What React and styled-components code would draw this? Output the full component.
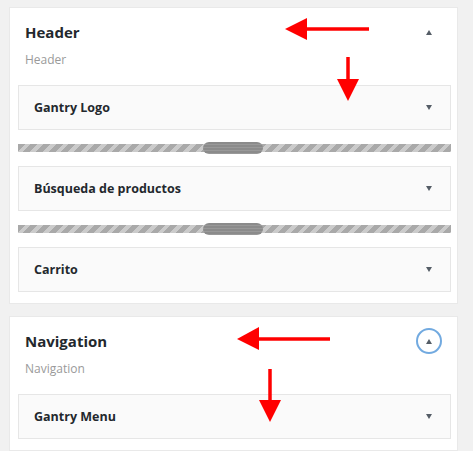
import React from "react";
import styled, { createGlobalStyle } from "styled-components";

const GlobalStyle = createGlobalStyle`
  body {
    margin: 0;
    background: #f1f1f1;
    font-family: "Open Sans", "Noto Sans", sans-serif;
  }
`;

const sections = [
  {
    title: "Header",
    subtitle: "Header",
    focused: false,
    widgets: ["Gantry Logo", "Búsqueda de productos", "Carrito"],
  },
  {
    title: "Navigation",
    subtitle: "Navigation",
    focused: true,
    widgets: ["Gantry Menu"],
  },
];

function Section({ title, subtitle, focused, widgets }) {
  return (
    <Panel>
      <TitleRow>
        <Title>{title}</Title>
        <Toggle $focused={focused}>
          <Caret $up />
        </Toggle>
      </TitleRow>
      <Subtitle>{subtitle}</Subtitle>
      <WidgetList>
        {widgets.map((w, i) => (
          <React.Fragment key={w}>
            {i > 0 && (
              <Separator>
                <Stripe />
                <Handle />
              </Separator>
            )}
            <Widget>
              <WidgetName>{w}</WidgetName>
              <Caret />
            </Widget>
          </React.Fragment>
        ))}
      </WidgetList>
    </Panel>
  );
}

function Arrows() {
  return (
    <Overlay width="473" height="451" viewBox="0 0 473 451">
      <g fill="#ff0000" stroke="#ff0000">
        <line x1="369" y1="29" x2="304" y2="29" strokeWidth="3.5" />
        <polygon points="285,29 307,18 307,40" stroke="none" />
        <line x1="348" y1="57" x2="348" y2="82" strokeWidth="3.5" />
        <polygon points="348,101 337,79 359,79" stroke="none" />
        <line x1="330" y1="339" x2="256" y2="339" strokeWidth="3.5" />
        <polygon points="237,339 259,327 259,350" stroke="none" />
        <line x1="270" y1="369" x2="270" y2="402" strokeWidth="3.5" />
        <polygon points="270,422 259,400 281,400" stroke="none" />
      </g>
    </Overlay>
  );
}

export default function App() {
  return (
    <>
      <GlobalStyle />
      <Page>
        {sections.map((s) => (
          <Section key={s.title} {...s} />
        ))}
        <Arrows />
      </Page>
    </>
  );
}

const Page = styled.div`
  position: relative;
  width: 473px;
  height: 451px;
  box-sizing: border-box;
  padding: 7px 15px 0 9px;
  display: flex;
  flex-direction: column;
  gap: 12px;
  overflow: hidden;
`;

const Panel = styled.section`
  background: #fff;
  border: 1px solid #e9e9e9;
  padding: 13px 6px 11px 8px;
`;

const TitleRow = styled.div`
  display: flex;
  align-items: center;
  justify-content: space-between;
  padding: 0 9px 0 7px;
  height: 22px;
`;

const Title = styled.h3`
  margin: 0;
  font-size: 15px;
  font-weight: 700;
  color: #23282d;
  line-height: 22px;
`;

const Toggle = styled.span`
  width: 26px;
  height: 26px;
  box-sizing: border-box;
  border-radius: 50%;
  border: 2px solid ${(p) => (p.$focused ? "#72aae0" : "transparent")};
  display: flex;
  align-items: center;
  justify-content: center;
`;

const Caret = styled.span`
  width: 0;
  height: 0;
  border-left: 3.5px solid transparent;
  border-right: 3.5px solid transparent;
  ${(p) =>
    p.$up
      ? "border-bottom: 5px solid #555d66;"
      : "border-top: 5px solid #555d66;"}
`;

const Subtitle = styled.div`
  margin-top: 8px;
  padding-left: 7px;
  font-size: 12px;
  line-height: 18px;
  color: #9a9a9a;
`;

const WidgetList = styled.div`
  margin-top: 16px;
  display: flex;
  flex-direction: column;
`;

const Widget = styled.div`
  height: 45px;
  box-sizing: border-box;
  background: #fafafa;
  border: 1px solid #e6e6e6;
  display: flex;
  align-items: center;
  justify-content: space-between;
  padding: 0 18px 0 15px;
`;

const WidgetName = styled.span`
  font-size: 12.5px;
  font-weight: 700;
  color: #23282d;
`;

const Separator = styled.div`
  position: relative;
  height: 36px;
  display: flex;
  align-items: center;
`;

const Stripe = styled.div`
  flex: 1;
  height: 8px;
  background: repeating-linear-gradient(
    135deg,
    #a9a9a9 0 5px,
    #cbcbcb 5px 9px
  );
`;

const Handle = styled.div`
  position: absolute;
  left: 185px;
  top: 12px;
  width: 60px;
  height: 12px;
  border-radius: 6px / 6px;
  background: repeating-linear-gradient(
    180deg,
    #8b8b8b 0 2px,
    #999 2px 3px
  );
`;

const Overlay = styled.svg`
  position: absolute;
  left: 0;
  top: 0;
  pointer-events: none;
`;
